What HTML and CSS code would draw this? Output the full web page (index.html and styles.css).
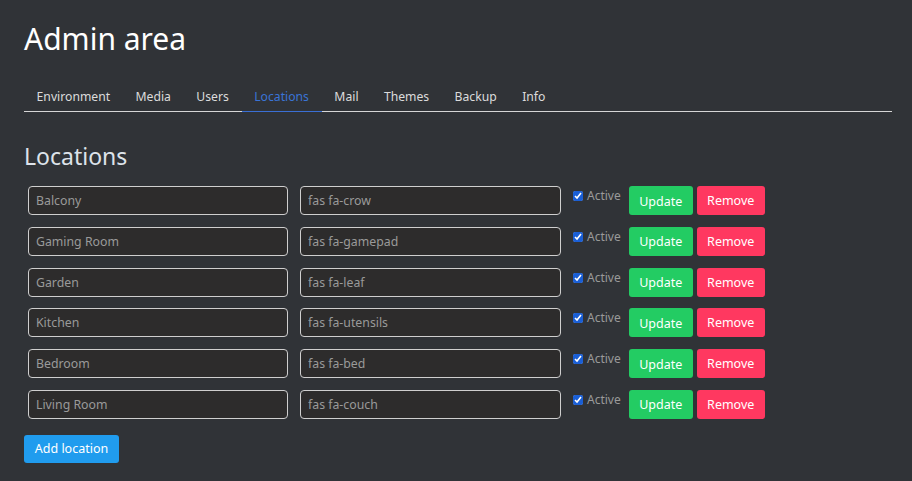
FILE: index.html
```html
<!DOCTYPE html>
<html>
<head>
<meta charset="utf-8">
<link rel="stylesheet" href="styles.css">
</head>
<body>
<div class="page">
  <h1 class="title">Admin area</h1>
  <ul class="tabs">
    <li class="tab">Environment</li>
    <li class="tab">Media</li>
    <li class="tab">Users</li>
    <li class="tab active">Locations</li>
    <li class="tab">Mail</li>
    <li class="tab">Themes</li>
    <li class="tab">Backup</li>
    <li class="tab">Info</li>
  </ul>
  <h2 class="subtitle">Locations</h2>
  <div class="rows">
    <div class="row">
      <input class="field name" value="Balcony">
      <input class="field icon" value="fas fa-crow">
      <label class="check"><input type="checkbox" checked> Active</label>
      <button class="btn update">Update</button>
      <button class="btn remove">Remove</button>
    </div>
    <div class="row">
      <input class="field name" value="Gaming Room">
      <input class="field icon" value="fas fa-gamepad">
      <label class="check"><input type="checkbox" checked> Active</label>
      <button class="btn update">Update</button>
      <button class="btn remove">Remove</button>
    </div>
    <div class="row">
      <input class="field name" value="Garden">
      <input class="field icon" value="fas fa-leaf">
      <label class="check"><input type="checkbox" checked> Active</label>
      <button class="btn update">Update</button>
      <button class="btn remove">Remove</button>
    </div>
    <div class="row">
      <input class="field name" value="Kitchen">
      <input class="field icon" value="fas fa-utensils">
      <label class="check"><input type="checkbox" checked> Active</label>
      <button class="btn update">Update</button>
      <button class="btn remove">Remove</button>
    </div>
    <div class="row">
      <input class="field name" value="Bedroom">
      <input class="field icon" value="fas fa-bed">
      <label class="check"><input type="checkbox" checked> Active</label>
      <button class="btn update">Update</button>
      <button class="btn remove">Remove</button>
    </div>
    <div class="row">
      <input class="field name" value="Living Room">
      <input class="field icon" value="fas fa-couch">
      <label class="check"><input type="checkbox" checked> Active</label>
      <button class="btn update">Update</button>
      <button class="btn remove">Remove</button>
    </div>
  </div>
  <button class="btn add">Add location</button>
</div>
</body>
</html>
```
FILE: styles.css
```css
html, body {
  margin: 0;
  padding: 0;
  background: #303337;
  height: 100%;
}
body {
  font-family: "Noto Sans", "Open Sans", sans-serif;
  color: #ffffff;
}
.page {
  padding: 18px 20px 0 24px;
}
.title {
  margin: 0;
  font-size: 30px;
  font-weight: 400;
  line-height: 42px;
  color: #ffffff;
}
.tabs {
  list-style: none;
  margin: 24px 0 0 0;
  padding: 0;
  display: flex;
  border-bottom: 1px solid #d6d6d6;
}
.tab {
  padding: 4px 12.8px 6px 12.6px;
  font-size: 12.2px;
  line-height: 17px;
  color: #dcdcdc;
  margin-bottom: -1px;
  border-bottom: 1px solid transparent;
}
.tab.active {
  color: #3a74d6;
  border-bottom-color: #3a6fd4;
}
.subtitle {
  margin: 28px 0 0 0;
  font-size: 23px;
  font-weight: 400;
  line-height: 32px;
  color: #dde3ea;
}
.rows {
  margin-top: 14px;
  padding-left: 4px;
  display: flex;
  flex-direction: column;
  gap: 11.8px;
}
.row {
  display: flex;
  align-items: flex-start;
  height: 29px;
}
.field {
  box-sizing: border-box;
  height: 29px;
  border: 1px solid #cfcfcf;
  border-radius: 4px;
  background: #2d2c2c;
  color: #9a9a9a;
  font-family: "Noto Sans", "Open Sans", sans-serif;
  font-size: 12.3px;
  padding: 0 7px;
  outline: none;
  margin: 0;
}
.field.name { width: 260px; }
.field.icon { width: 261px; margin-left: 12px; }
.check {
  margin-left: 12px;
  display: flex;
  align-items: center;
  gap: 4px;
  font-size: 12px;
  line-height: 16px;
  color: #9a9a9a;
  margin-top: 2px;
}
.check input {
  margin: 0;
  width: 10px;
  height: 10px;
  accent-color: #1a5fd6;
}
.btn {
  box-sizing: border-box;
  height: 29px;
  border: none;
  border-radius: 3px;
  color: #ffffff;
  font-family: "Noto Sans", "Open Sans", sans-serif;
  font-size: 12.5px;
  padding: 0;
  cursor: pointer;
}
.update {
  background: #23cc63;
  width: 64px;
  margin-left: 8px;
  padding-top: 1px;
}
.remove {
  background: #ff3860;
  width: 68px;
  margin-left: 4px;
}
.add {
  margin-top: 16px;
  background: #209cee;
  width: 95px;
  height: 28px;
}
```
